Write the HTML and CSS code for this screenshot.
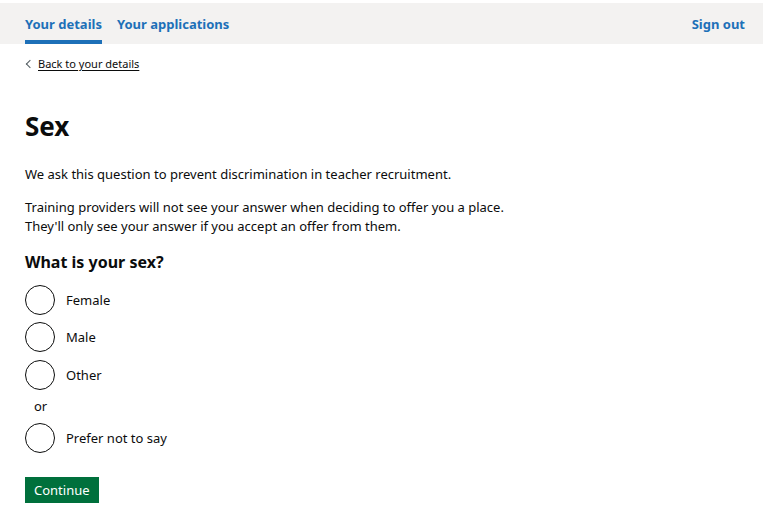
FILE: index.html
```html
<!DOCTYPE html>
<html lang="en">
<head>
<meta charset="utf-8">
<title>Sex</title>
<link rel="stylesheet" href="styles.css">
</head>
<body>
<header class="nav">
  <nav class="nav-inner">
    <div class="nav-left">
      <a class="nav-link active" href="#">Your details</a>
      <a class="nav-link" href="#">Your applications</a>
    </div>
    <a class="nav-link" href="#">Sign out</a>
  </nav>
</header>
<main class="page">
  <a class="back" href="#"><span class="chev"></span>Back to your details</a>
  <h1 class="title">Sex</h1>
  <p class="body">We ask this question to prevent discrimination in teacher recruitment.</p>
  <p class="body">Training providers will not see your answer when deciding to offer you a place.<br>They'll only see your answer if you accept an offer from them.</p>
  <fieldset class="fieldset">
    <legend class="legend">What is your sex?</legend>
    <div class="radios">
      <label class="radio"><span class="circle"></span>Female</label>
      <label class="radio"><span class="circle"></span>Male</label>
      <label class="radio"><span class="circle"></span>Other</label>
      <div class="divider">or</div>
      <label class="radio"><span class="circle"></span>Prefer not to say</label>
    </div>
  </fieldset>
  <button class="button" type="button">Continue</button>
</main>
</body>
</html>
```
FILE: styles.css
```css
* { box-sizing: border-box; }
body {
  margin: 0;
  font-family: "Noto Sans", Arial, sans-serif;
  color: #0b0c0c;
  background: #fff;
}
.nav {
  margin-top: 3px;
  background: #f3f2f1;
  height: 41px;
}
.nav-inner {
  display: flex;
  justify-content: space-between;
  align-items: stretch;
  height: 100%;
  padding: 0 18px 0 25px;
}
.nav-left { display: flex; gap: 15px; }
.nav-link {
  display: flex;
  align-items: center;
  color: #1d70b8;
  font-weight: 700;
  font-size: 13px;
  text-decoration: none;
  border-bottom: 4px solid transparent;
  padding-top: 4px;
}
.nav-link.active { border-bottom-color: #1d70b8; }
.page { padding: 0 25px; }
.back {
  display: inline-flex;
  align-items: center;
  margin-top: 12px;
  font-size: 11px;
  color: #0b0c0c;
  text-decoration: underline;
  text-underline-offset: 2px;
}
.chev {
  width: 6px; height: 6px;
  border-left: 1px solid #505a5f;
  border-bottom: 1px solid #505a5f;
  transform: rotate(45deg);
  margin: 0 5px 0 2px;
}
.title {
  margin: 39px 0 23px;
  font-size: 26px;
  font-weight: 700;
  line-height: 1.2;
}
.body {
  margin: 0 0 14px;
  font-size: 13px;
  line-height: 19px;
}
.fieldset { border: 0; margin: 0; padding: 0; }
.legend {
  padding: 0;
  margin: 0 0 6px;
  font-size: 16px;
  font-weight: 700;
  line-height: 24px;
}
.radios { display: flex; flex-direction: column; gap: 7.5px; padding-top: 5px; }
.radio {
  display: flex;
  align-items: center;
  gap: 11px;
  font-size: 13px;
  min-height: 30px;
}
.circle {
  width: 30px; height: 30px;
  border: 1.5px solid #0b0c0c;
  border-radius: 50%;
  flex: none;
}
.divider {
  font-size: 13px;
  padding-left: 9px;
  line-height: 19px;
  margin: 0 0 -1px;
}
.button {
  display: block;
  margin-top: 24px;
  background: #00703c;
  color: #fff;
  border: 0;
  box-shadow: 0 2px 0 #002d18;
  font-family: inherit;
  font-size: 13px;
  padding: 0 9px;
  height: 26px;
  line-height: 26px;
}
```
